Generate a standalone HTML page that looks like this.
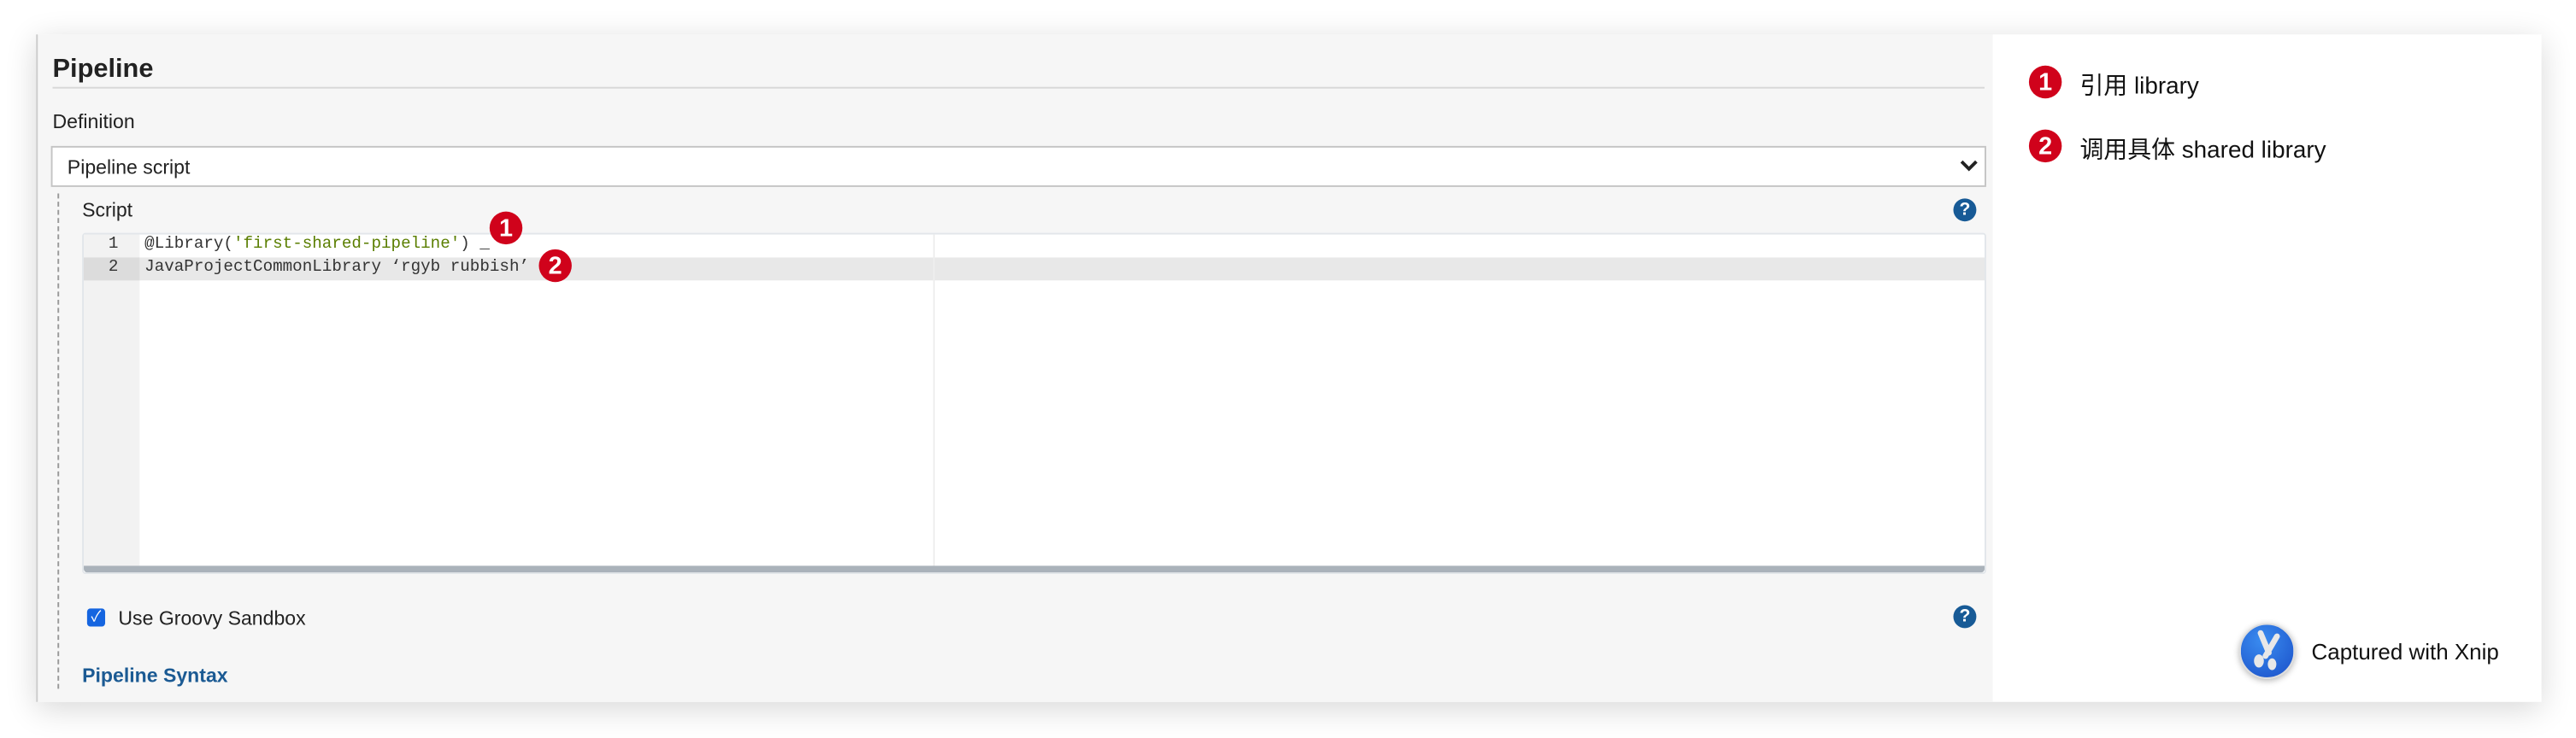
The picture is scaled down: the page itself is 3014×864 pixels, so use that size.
<!DOCTYPE html>
<html><head><meta charset="utf-8">
<style>
html,body{margin:0;padding:0;background:#fff;width:3014px;height:864px;overflow:hidden}
#w{position:absolute;left:0;top:0;width:1568px;height:450px;transform-origin:0 0;transform:scale(1.92219,1.92);font-family:"Liberation Sans","Noto Sans CJK SC",sans-serif;color:#222}
.a{position:absolute}
.card{left:22px;top:21px;width:1525px;height:407px;background:#fff;box-shadow:0 4px 18px rgba(0,0,0,.16)}
.left{left:22px;top:21px;width:1191px;height:407px;background:#f6f6f6;border-left:1px solid #ccc;box-sizing:border-box}
.badge{width:20px;height:20px;border-radius:50%;background:#d0021b;color:#fff;font-size:15px;font-weight:bold;line-height:21px;text-align:center;font-family:"Liberation Sans",sans-serif}
.help{width:14px;height:14px;border-radius:50%;background:#175a96;color:#fff;font-size:11px;font-weight:bold;line-height:14px;text-align:center}
.code{font-family:"Liberation Mono",monospace;font-size:10px;line-height:14px;color:#333;white-space:pre}
</style></head><body><div id="w">
<div class="a card"></div>
<div class="a left"></div>
<div class="a" style="left:32px;top:34px;font-size:16px;font-weight:bold">Pipeline</div>
<div class="a" style="left:32px;top:53px;width:1176px;height:1px;background:#d8d8d8"></div>
<div class="a" style="left:32px;top:67px;font-size:12px">Definition</div>
<div class="a" style="left:31px;top:89px;width:1178px;height:25px;background:#fff;border:1px solid #c4c4c4;box-sizing:border-box"></div>
<div class="a" style="left:41px;top:95px;font-size:12px">Pipeline script</div>
<svg class="a" style="left:1193px;top:97px" width="11" height="8" viewBox="0 0 11 8"><path d="M1 1.5 L5.5 6 L10 1.5" stroke="#222" stroke-width="2" fill="none"/></svg>
<div class="a" style="left:35px;top:118px;height:302px;border-left:1px dashed #999"></div>
<div class="a" style="left:50px;top:121px;font-size:12px">Script</div>
<div class="a help" style="left:1189px;top:121px">?</div>
<div class="a" style="left:50px;top:142px;width:1159px;height:208px;background:#fff;border:1px solid #e2e6ea;box-sizing:border-box;border-radius:2px"></div>
<div class="a" style="left:51px;top:143px;width:34px;height:202px;background:#f2f2f2"></div>
<div class="a" style="left:51px;top:157px;width:1157px;height:14px;background:#e8e8e8"></div>
<div class="a" style="left:51px;top:157px;width:34px;height:14px;background:#dcdcdc"></div>
<div class="a" style="left:568px;top:143px;width:1px;height:202px;background:#eee"></div>
<div class="a" style="left:51px;top:345px;width:1157px;height:4px;background:#aab2ba;border-radius:0 0 2px 2px"></div>
<div class="a code" style="left:66px;top:143px;color:#333">1
2</div>
<div class="a code" style="left:88px;top:143px">@Library(<span style="color:#5a7e00">'first-shared-pipeline'</span>) _
JavaProjectCommonLibrary ‘rgyb rubbish’</div>
<div class="a badge" style="left:298px;top:129px">1</div>
<div class="a badge" style="left:328px;top:152px">2</div>
<div class="a" style="left:53px;top:371px;width:11px;height:11px;border-radius:2px;background:#1565e0;color:#fff;font-size:9px;line-height:11px;text-align:center">✓</div>
<div class="a" style="left:72px;top:370px;font-size:12px">Use Groovy Sandbox</div>
<div class="a help" style="left:1189px;top:369px">?</div>
<div class="a" style="left:50px;top:405px;font-size:12px;font-weight:bold;color:#1b5a93">Pipeline Syntax</div>
<div class="a badge" style="left:1235px;top:40px">1</div>
<div class="a" style="left:1266px;top:41px;font-size:14.5px;color:#111">引用 library</div>
<div class="a badge" style="left:1235px;top:79px">2</div>
<div class="a" style="left:1266px;top:80px;font-size:14.5px;color:#111">调用具体 shared library</div>
<div class="a" style="left:1363px;top:380px;width:34px;height:34px;border-radius:50%;background:radial-gradient(circle at 40% 30%,#3a8cf0,#1a4fc8);box-shadow:0 1px 4px rgba(0,0,0,.3);border:1px solid #ddd;box-sizing:border-box"></div>
<svg class="a" style="left:1368px;top:384px" width="24" height="26" viewBox="0 0 24 26"><path d="M8 2 L13 14 M18 4 L11 16" stroke="#e8e8e8" stroke-width="3.5" stroke-linecap="round"/><ellipse cx="7" cy="19" rx="3" ry="4" fill="#e8e8e8"/><ellipse cx="15" cy="21" rx="2.6" ry="3.6" fill="#e8e8e8"/></svg>
<div class="a" style="left:1407px;top:390px;font-size:13.5px;color:#111">Captured with Xnip</div>
</div></body></html>
